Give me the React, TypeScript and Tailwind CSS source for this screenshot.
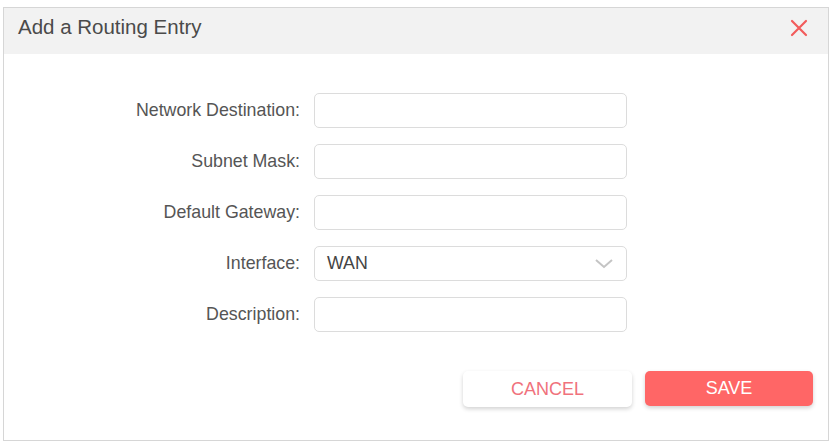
import React from "react";

const rows = [
  { label: "Network Destination:" },
  { label: "Subnet Mask:" },
  { label: "Default Gateway:" },
  { label: "Interface:", select: "WAN" },
  { label: "Description:" },
];

export default function App() {
  return (
    <div className="w-[837px] h-[445px] bg-white pt-[7px] pl-[3px]" style={{ fontFamily: '"Liberation Sans", Arial, sans-serif' }}>
      <div className="w-[826px] h-[434px] border border-[#d6d6d6] flex flex-col">
        <div className="h-[46px] bg-[#f2f2f2] flex items-center justify-between pl-[14px] pr-[20px] pb-[8px]">
          <span className="text-[20.5px] text-[#4a4a4a]">Add a Routing Entry</span>
          <svg width="18" height="18" viewBox="0 0 18 18" className="mt-[2px]">
            <path d="M2 2 L16 16 M16 2 L2 16" stroke="#f25c5c" strokeWidth="2.2" strokeLinecap="round" />
          </svg>
        </div>
        <div className="flex flex-col gap-[16px] pt-[39px]">
          {rows.map((r) => (
            <div key={r.label} className="flex items-center">
              <div className="w-[310px] text-right text-[17.8px] text-[#555] pr-[14px]">{r.label}</div>
              <div className="w-[313px] h-[35px] border border-[#dcdcdc] rounded-[5px] bg-white flex items-center justify-between pl-[12px] pr-[12px]">
                {r.select ? (
                  <>
                    <span className="text-[17.8px] text-[#444]">{r.select}</span>
                    <svg width="20" height="11" viewBox="0 0 20 11">
                      <path d="M2 2 L10 9 L18 2" stroke="#c4c4c4" strokeWidth="2" fill="none" />
                    </svg>
                  </>
                ) : null}
              </div>
            </div>
          ))}
        </div>
        <div className="flex justify-end gap-[13px] pr-[15px] pt-[39px]">
          <button className="w-[169px] h-[36px] rounded-[5px] bg-white text-[#f0727c] text-[18px] shadow-[0_2px_4px_rgba(0,0,0,0.18)]">CANCEL</button>
          <button className="w-[168px] h-[35px] rounded-[5px] bg-[#ff6666] text-white text-[18px] shadow-[0_2px_4px_rgba(0,0,0,0.18)]">SAVE</button>
        </div>
      </div>
    </div>
  );
}
